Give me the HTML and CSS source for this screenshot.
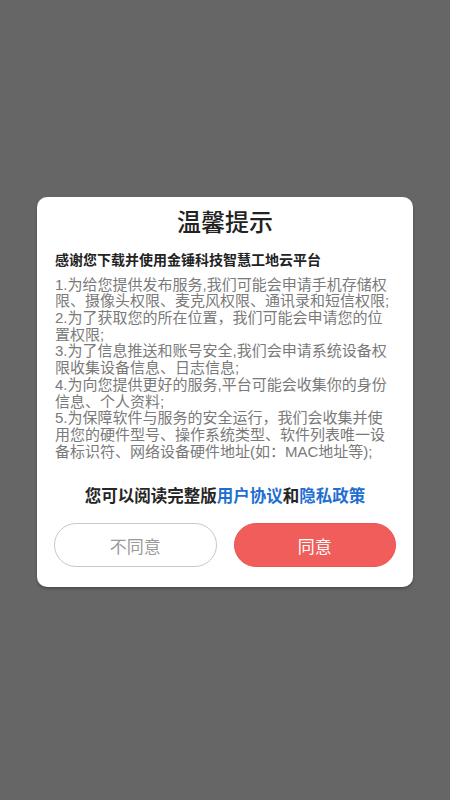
FILE: index.html
```html
<!DOCTYPE html>
<html lang="zh-CN">
<head>
<meta charset="utf-8">
<link rel="stylesheet" href="styles.css">
</head>
<body>
<div class="dialog">
  <h1 class="title">温馨提示</h1>
  <p class="subtitle">感谢您下载并使用金锤科技智慧工地云平台</p>
  <div class="content">
    <p>1.为给您提供发布服务,我们可能会申请手机存储权限、摄像头权限、麦克风权限、通讯录和短信权限;</p>
    <p>2.为了获取您的所在位置，我们可能会申请您的位置权限;</p>
    <p>3.为了信息推送和账号安全,我们会申请系统设备权限收集设备信息、日志信息;</p>
    <p>4.为向您提供更好的服务,平台可能会收集你的身份信息、个人资料;</p>
    <p>5.为保障软件与服务的安全运行，我们会收集并使用您的硬件型号、操作系统类型、软件列表唯一设备标识符、网络设备硬件地址(如：MAC地址等);</p>
  </div>
  <p class="footer">您可以阅读完整版<span class="link">用户协议</span>和<span class="link">隐私政策</span></p>
  <div class="actions">
    <button class="btn btn-ghost">不同意</button>
    <button class="btn btn-primary">同意</button>
  </div>
</div>
</body>
</html>
```
FILE: styles.css
```css
html, body {
  margin: 0;
  padding: 0;
}
body {
  background: #666666;
  width: 450px;
  height: 800px;
  padding-top: 197px;
  box-sizing: border-box;
  font-family: "Liberation Sans", "Noto Sans CJK SC", sans-serif;
}
.dialog {
  width: 376px;
  height: 390px;
  margin-left: 37px;
  box-sizing: border-box;
  background: #ffffff;
  border-radius: 10px;
  box-shadow: 0 2px 3px rgba(0, 0, 0, 0.25);
  padding-top: 10px;
  display: flex;
  flex-direction: column;
}
.title {
  margin: 0;
  font-size: 24px;
  line-height: 32px;
  font-weight: 500;
  color: #222222;
  text-align: center;
}
.subtitle {
  margin: 11px 0 0;
  padding: 0 18px;
  font-size: 14px;
  line-height: 20px;
  font-weight: 700;
  color: #222222;
}
.content {
  margin-top: 6.6px;
  padding: 0 19px 0 18px;
  font-size: 15px;
  line-height: 16.7px;
  color: #7a7a7a;
}
.content p {
  margin: 0;
}
.footer {
  margin: 25px 0 0;
  text-align: center;
  font-size: 16.5px;
  line-height: 22px;
  font-weight: 700;
  color: #262626;
}
.link {
  color: #1f6fd1;
}
.actions {
  margin-top: 16px;
  padding: 0 17px;
  display: flex;
  gap: 17px;
}
.btn {
  flex: 1;
  height: 44px;
  border-radius: 22px;
  font-family: "Liberation Sans", "Noto Sans CJK SC", sans-serif;
  font-size: 17px;
  cursor: pointer;
  box-sizing: border-box;
}
.btn-ghost {
  background: #ffffff;
  border: 1.5px solid #c8c8c8;
  color: #9a9a9a;
}
.btn-primary {
  background: #f05d5a;
  border: 1px solid #ec5451;
  color: #ffffff;
}
```
